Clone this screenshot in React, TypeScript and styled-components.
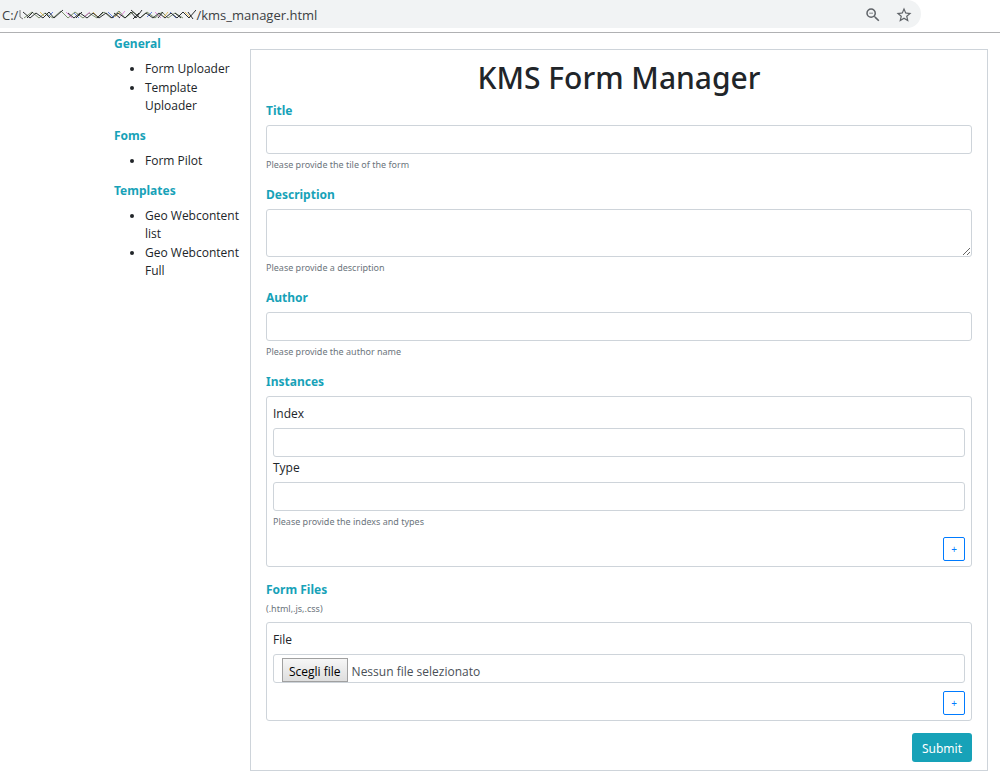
import React from "react";
import styled, { createGlobalStyle } from "styled-components";
import { MdOutlineZoomOut, MdStarBorder } from "react-icons/md";

const GlobalStyle = createGlobalStyle`
  *, *::before, *::after { box-sizing: border-box; }
  body {
    margin: 0;
    background: #fff;
    color: #212529;
    font: 12px/18px "Open Sans", "Noto Sans", sans-serif;
  }
`;

const BrowserBar = styled.header`
  height: 33px;
  padding: 0 79px 4px 0;
  border-bottom: 1px solid #b0b1b3;
`;
const AddressBar = styled.div`
  display: flex;
  align-items: center;
  height: 28px;
  padding: 2px 8px 0 2px;
  border-radius: 0 14px 14px 0;
  background: #f1f3f4;
  color: #3c4043;
  font-size: 13px;
`;
const Address = styled.div`
  display: flex;
  flex: 1;
  align-items: center;
`;
const IconButton = styled.button`
  display: grid;
  place-items: center;
  width: 18px;
  height: 18px;
  margin-left: 13px;
  padding: 0;
  border: 0;
  background: none;
  color: #5f6368;
  font-size: 18px;
`;

const Page = styled.div`
  display: grid;
  grid-template-columns: 136px 1fr;
  align-items: start;
  padding: 0 12px 10px 114px;
`;
const Sidebar = styled.nav`
  padding: 2px 8px 0 0;
`;
const SectionTitle = styled.h2`
  margin: 0 0 7px;
  color: #17a2b8;
  font: 700 12px/18px "Noto Sans", sans-serif;
`;
const LinkList = styled.ul`
  margin: 0 0 12px;
  padding-left: 31px;

  li + li { margin-top: 1px; }
`;
const NavLink = styled.a`
  color: inherit;
  text-decoration: none;
`;

const FormPanel = styled.form`
  margin-top: 16px;
  padding: 10px 15px 8px;
  border: 1px solid #ced4da;
`;
const Heading = styled.h1`
  margin: 0 0 6px;
  font: 500 30px/36px "Noto Sans", sans-serif;
  text-align: center;
`;
const Group = styled.div`
  margin-bottom: 14px;
`;
const GroupLabel = styled.label`
  display: block;
  margin-bottom: 5px;
  color: #17a2b8;
  font-family: "Noto Sans", sans-serif;
  font-weight: 700;
`;
const FieldLabel = styled.label`
  display: block;
  margin-bottom: 5px;
`;
const TextInput = styled.input`
  display: block;
  width: 100%;
  height: 29px;
  padding: 4px 9px;
  border: 1px solid #ced4da;
  border-radius: 3px;
  background: #fff;
  color: #495057;
  font: inherit;
`;
const TextArea = styled.textarea`
  display: block;
  width: 100%;
  height: 48px;
  padding: 4px 9px;
  border: 1px solid #ced4da;
  border-radius: 3px;
  resize: vertical;
  font: inherit;
`;
const Help = styled.small`
  display: block;
  margin-top: 4px;
  color: #6c757d;
  font: 9px/14px "Noto Sans", sans-serif;
`;
const FieldBox = styled.div`
  padding: 8px 6px 5px;
  border: 1px solid #ced4da;
  border-radius: 3px;
`;
const FieldStack = styled.div`
  display: grid;
  gap: 2px;
`;
const Actions = styled.div`
  display: flex;
  justify-content: flex-end;
  margin-top: 8px;
`;
const SubmitRow = styled(Actions)`
  margin-top: 12px;
`;
const AddButton = styled.button`
  width: 22px;
  height: 24px;
  padding: 0;
  border: 1px solid #007bff;
  border-radius: 2px;
  background: #fff;
  color: #007bff;
  font: 10px/14px "Noto Sans", sans-serif;
`;
const SubmitButton = styled.button`
  height: 29px;
  padding: 2px 10px 0;
  border: 0;
  border-radius: 3px;
  background: #17a2b8;
  color: #fff;
  font: 12px/18px "Noto Sans", sans-serif;
`;
const FileNote = styled(Help)`
  margin: -2px 0 6px;
`;
const FileControl = styled.label`
  display: flex;
  align-items: flex-end;
  height: 29px;
  padding-left: 8px;
  border: 1px solid #ced4da;
  border-radius: 3px;
  color: #495057;
`;
const HiddenFile = styled.input`
  position: absolute;
  width: 1px;
  height: 1px;
  opacity: 0;
`;
const FileButton = styled.span`
  height: 24px;
  margin-right: 4px;
  padding: 4px 6px 0;
  border: 1px solid #a0a0a0;
  background: linear-gradient(#f6f6f6, #dedede);
  color: #000;
`;
const FileName = styled.span`
  padding-bottom: 1px;
`;

const sections = [
  { title: "General", links: ["Form Uploader", "Template Uploader"] },
  { title: "Foms", links: ["Form Pilot"] },
  { title: "Templates", links: ["Geo Webcontent list", "Geo Webcontent Full"] },
];

function Scribble() {
  return (
    <svg width="178" height="14" viewBox="0 0 178 14" fill="none" aria-hidden="true">
      <path d="M2 2v7l3 2" stroke="#777" />
      <path d="M6 10l8-6 7 6 6-5 8 5 8-7 7 7 7-6 8 6 6-5 8 5 7-6 7 6 8-7 6 7 8-6 7 6 7-6 8 6 7-6 6 6 7-5 8 5" stroke="#5d7448" strokeOpacity=".8" />
      <path d="M9 10l4-4M48 4l6 6M66 9l6-5M101 10l6-7M137 4l6 6M160 9l5-5" stroke="#d65fd0" strokeOpacity=".7" />
      <path d="M30 9l5-5M56 5l5 5M90 4l6 6M129 9l5-5M152 4l6 6" stroke="#4468d8" strokeOpacity=".8" />
      <path d="M22 4l5 5M75 4l5 5M97 9l5-5M146 9l4-5M167 4l5 5" stroke="#e0b040" strokeOpacity=".8" />
      <path d="M5 4l7 6 6-5 7 5 6-6 5 6 9-8M50 5l6 5 6-5 7 5 6-5 6 5 7-5 6 5 6-5 7 5 6-6 5 6 6-8M113 2l9 8 6-5 7 5 6-5 6 5 6-5 6 5 6-6 6 6 7-8" stroke="#2b2e30" />
      <path d="M9 10l6-6M27 5l5 5M58 10l6-6M79 10l6-6M96 5l6 5M115 11l6-6M140 10l5-6M157 5l6 5M170 4l5 7" stroke="#2b2e30" />
    </svg>
  );
}

export default function App() {
  return (
    <>
      <GlobalStyle />
      <BrowserBar>
        <AddressBar>
          <Address>
            <span>C:/</span>
            <Scribble />
            <span>/kms_manager.html</span>
          </Address>
          <IconButton aria-label="Zoom out"><MdOutlineZoomOut /></IconButton>
          <IconButton aria-label="Bookmark"><MdStarBorder /></IconButton>
        </AddressBar>
      </BrowserBar>
      <Page>
        <Sidebar>
          {sections.map((section) => (
            <section key={section.title}>
              <SectionTitle>{section.title}</SectionTitle>
              <LinkList>
                {section.links.map((link) => (
                  <li key={link}><NavLink href="#">{link}</NavLink></li>
                ))}
              </LinkList>
            </section>
          ))}
        </Sidebar>
        <FormPanel onSubmit={(e) => e.preventDefault()}>
          <Heading>KMS Form Manager</Heading>
          <Group>
            <GroupLabel htmlFor="title">Title</GroupLabel>
            <TextInput id="title" />
            <Help>Please provide the tile of the form</Help>
          </Group>
          <Group>
            <GroupLabel htmlFor="description">Description</GroupLabel>
            <TextArea id="description" />
            <Help>Please provide a description</Help>
          </Group>
          <Group>
            <GroupLabel htmlFor="author">Author</GroupLabel>
            <TextInput id="author" />
            <Help>Please provide the author name</Help>
          </Group>
          <Group>
            <GroupLabel as="div" id="instances">Instances</GroupLabel>
            <FieldBox role="group" aria-labelledby="instances">
              <FieldStack>
                <div>
                  <FieldLabel htmlFor="index">Index</FieldLabel>
                  <TextInput id="index" />
                </div>
                <div>
                  <FieldLabel htmlFor="type">Type</FieldLabel>
                  <TextInput id="type" />
                </div>
              </FieldStack>
              <Help>Please provide the indexs and types</Help>
              <Actions><AddButton type="button">+</AddButton></Actions>
            </FieldBox>
          </Group>
          <GroupLabel as="div" id="files">Form Files</GroupLabel>
          <FileNote>(.html,.js,.css)</FileNote>
          <FieldBox role="group" aria-labelledby="files">
            <FieldLabel htmlFor="file">File</FieldLabel>
            <FileControl>
              <HiddenFile id="file" type="file" />
              <FileButton>Scegli file</FileButton>
              <FileName>Nessun file selezionato</FileName>
            </FileControl>
            <Actions><AddButton type="button">+</AddButton></Actions>
          </FieldBox>
          <SubmitRow><SubmitButton>Submit</SubmitButton></SubmitRow>
        </FormPanel>
      </Page>
    </>
  );
}
